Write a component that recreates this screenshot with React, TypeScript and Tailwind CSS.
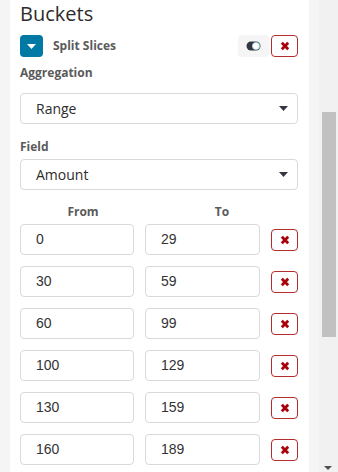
import React from "react";

const rows = [
  ["0", "29"],
  ["30", "59"],
  ["60", "99"],
  ["100", "129"],
  ["130", "159"],
  ["160", "189"],
];

function XIcon() {
  return (
    <svg width="10" height="10" viewBox="0 0 10 10">
      <path d="M1.8 1.8 L8.2 8.2 M8.2 1.8 L1.8 8.2" stroke="#a8000b" strokeWidth="2.8" strokeLinecap="butt" />
    </svg>
  );
}

function DeleteBtn() {
  return (
    <div className="w-[27px] h-[22px] rounded-[4px] border border-[#b42b2b] bg-white flex items-center justify-center">
      <XIcon />
    </div>
  );
}

function Caret({ color = "#343741" }: { color?: string }) {
  return (
    <svg width="9" height="5" viewBox="0 0 9 5">
      <path d="M0 0 L9 0 L4.5 5 Z" fill={color} />
    </svg>
  );
}

function Select({ label }: { label: string }) {
  return (
    <div className="h-[31px] rounded-[4px] border border-[#d9d9d9] bg-white flex items-center justify-between pl-[15px] pr-[9px]">
      <span className="text-[14px] text-[#2d2d2d] font-['Open_Sans',sans-serif]">{label}</span>
      <Caret />
    </div>
  );
}

function NumInput({ value }: { value: string }) {
  return (
    <div className="h-[31px] rounded-[4px] border border-[#d9d9d9] bg-white flex items-center pl-[15px]">
      <span className="text-[14px] text-[#333] font-['Liberation_Sans',Arial,sans-serif]">{value}</span>
    </div>
  );
}

export default function App() {
  return (
    <div className="w-[338px] h-[472px] overflow-hidden flex bg-[#f5f5f5] font-['Open_Sans',sans-serif]">
      <div className="w-[10px] shrink-0 bg-[#f5f5f5]" />
      <div className="w-[299px] shrink-0 bg-white pl-[10px] pr-[11px] flex flex-col">
        <div className="text-[20px] leading-[28px] text-[#2d2d2d]">Buckets</div>
        <div className="mt-[7px] h-[22px] flex items-center">
          <div className="w-[23px] h-[22px] rounded-[4px] bg-[#0079a5] flex items-center justify-center">
            <Caret color="#ffffff" />
          </div>
          <span className="ml-[10px] text-[12px] font-bold text-[#5a5a5a]">Split Slices</span>
          <div className="ml-auto flex items-center gap-[2px]">
            <div className="w-[31px] h-[22px] rounded-[4px] bg-[#f5f5f5] flex items-center justify-center">
              <svg width="15" height="10" viewBox="0 0 15 10">
                <rect x="0.5" y="0.5" width="14" height="9" rx="4.5" fill="#343741" />
                <circle cx="10" cy="5" r="3.6" fill="#ffffff" stroke="#9fd3f0" strokeWidth="0.8" />
              </svg>
            </div>
            <DeleteBtn />
          </div>
        </div>
        <div className="mt-[8px] text-[12px] leading-[16px] font-bold text-[#5a5a5a]">Aggregation</div>
        <div className="mt-[12px]">
          <Select label="Range" />
        </div>
        <div className="mt-[15px] text-[12px] leading-[16px] font-bold text-[#5a5a5a]">Field</div>
        <div className="mt-[4px]">
          <Select label="Amount" />
        </div>
        <div className="mt-[14px] grid grid-cols-[126px_152px] text-[12px] leading-[16px] font-bold text-[#5a5a5a]">
          <div className="text-center">From</div>
          <div className="text-center">To</div>
        </div>
        <div className="mt-[4px] flex flex-col gap-[11px]">
          {rows.map(([a, b]) => (
            <div key={a} className="grid grid-cols-[114px_115px_27px] gap-x-[11px] items-center">
              <NumInput value={a} />
              <NumInput value={b} />
              <DeleteBtn />
            </div>
          ))}
        </div>
      </div>
      <div className="w-[10px] shrink-0 bg-[#f5f5f5]" />
      <div className="w-[19px] shrink-0 bg-[#f1f1f1] flex flex-col items-center pt-[112px] relative">
        <div className="w-[14px] h-[225px] bg-[#c1c1c1]" />
        <div className="absolute bottom-[2px] left-[5px]">
          <svg width="8" height="4" viewBox="0 0 8 4">
            <path d="M0 0 L8 0 L4 4 Z" fill="#505050" />
          </svg>
        </div>
      </div>
    </div>
  );
}
